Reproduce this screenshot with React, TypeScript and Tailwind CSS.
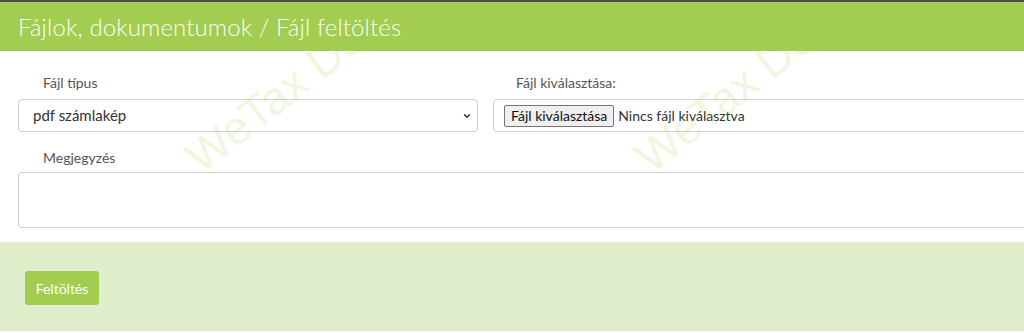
import { ChevronDown } from "lucide-react";

const FONT = "font-['Lato','Open_Sans',sans-serif]";

function Watermark({ className }: { className: string }) {
  return (
    <div
      className={`pointer-events-none absolute select-none whitespace-nowrap text-[46px] font-['Liberation_Sans',sans-serif] text-[#a6d34f] opacity-[0.17] -rotate-[38deg] origin-left ${className}`}
    >
      WeTax Dokumentum
    </div>
  );
}

export default function App() {
  return (
    <div className={`relative w-[1024px] h-[333px] overflow-hidden bg-white ${FONT}`}>
      <header className="relative z-20 h-[51px] border-t-2 border-[#4a4a4a] bg-[#a2cd50] pl-[18px] flex items-center">
        <h1 className="text-[24px] leading-none font-light text-[#fbfdf6] tracking-[0.1px]">
          Fájlok, dokumentumok / Fájl feltöltés
        </h1>
      </header>

      <main className="px-[18px] pt-[22px] pb-[14px]">
        <div className="flex gap-[15px]">
          <div className="w-[460px] shrink-0">
            <label className="block h-5 leading-5 pl-[25px] text-[14px] text-[#555]">Fájl típus</label>
            <div className="relative mt-[6px]">
              <select
                defaultValue="pdf"
                className="block w-full h-[33px] appearance-none rounded-[4px] border border-[#ccd1d7] bg-transparent pl-[14px] text-[15px] text-[#333] outline-none"
              >
                <option value="pdf">pdf számlakép</option>
              </select>
              <ChevronDown
                className="pointer-events-none absolute right-[6px] top-[12px] w-[10px] h-[10px] text-[#333]"
                strokeWidth={3.5}
              />
            </div>
          </div>
          <div className="w-[580px] shrink-0">
            <label className="block h-5 leading-5 pl-[23px] text-[14px] text-[#555]">Fájl kiválasztása:</label>
            <div className="mt-[6px] h-[33px] rounded-[4px] border border-[#ccd1d7] flex items-center pl-[10px] gap-1">
              <button
                type="button"
                className="h-[22px] px-[6px] rounded-[2px] border border-[#767676] bg-[#efefef] text-[14px] leading-none text-[#111]"
              >
                Fájl kiválasztása
              </button>
              <span className="text-[14px] text-[#333]">Nincs fájl kiválasztva</span>
            </div>
          </div>
        </div>

        <label className="block mt-4 h-5 leading-5 pl-[25px] text-[14px] text-[#555]">Megjegyzés</label>
        <textarea className="block mt-1 w-[1040px] h-[56px] resize-none rounded-[4px] border border-[#ccd1d7] bg-transparent outline-none" />
      </main>

      <footer className="h-[89px] bg-[#e0eecb] pl-[25px] pt-[29px]">
        <button
          type="button"
          className="h-[34px] w-[74px] rounded-[3px] bg-[#a2cd50] text-[14px] text-white"
        >
          Feltöltés
        </button>
      </footer>

      <Watermark className="left-[192px] top-[128px] z-10" />
      <Watermark className="left-[642px] top-[128px] z-10" />
    </div>
  );
}
